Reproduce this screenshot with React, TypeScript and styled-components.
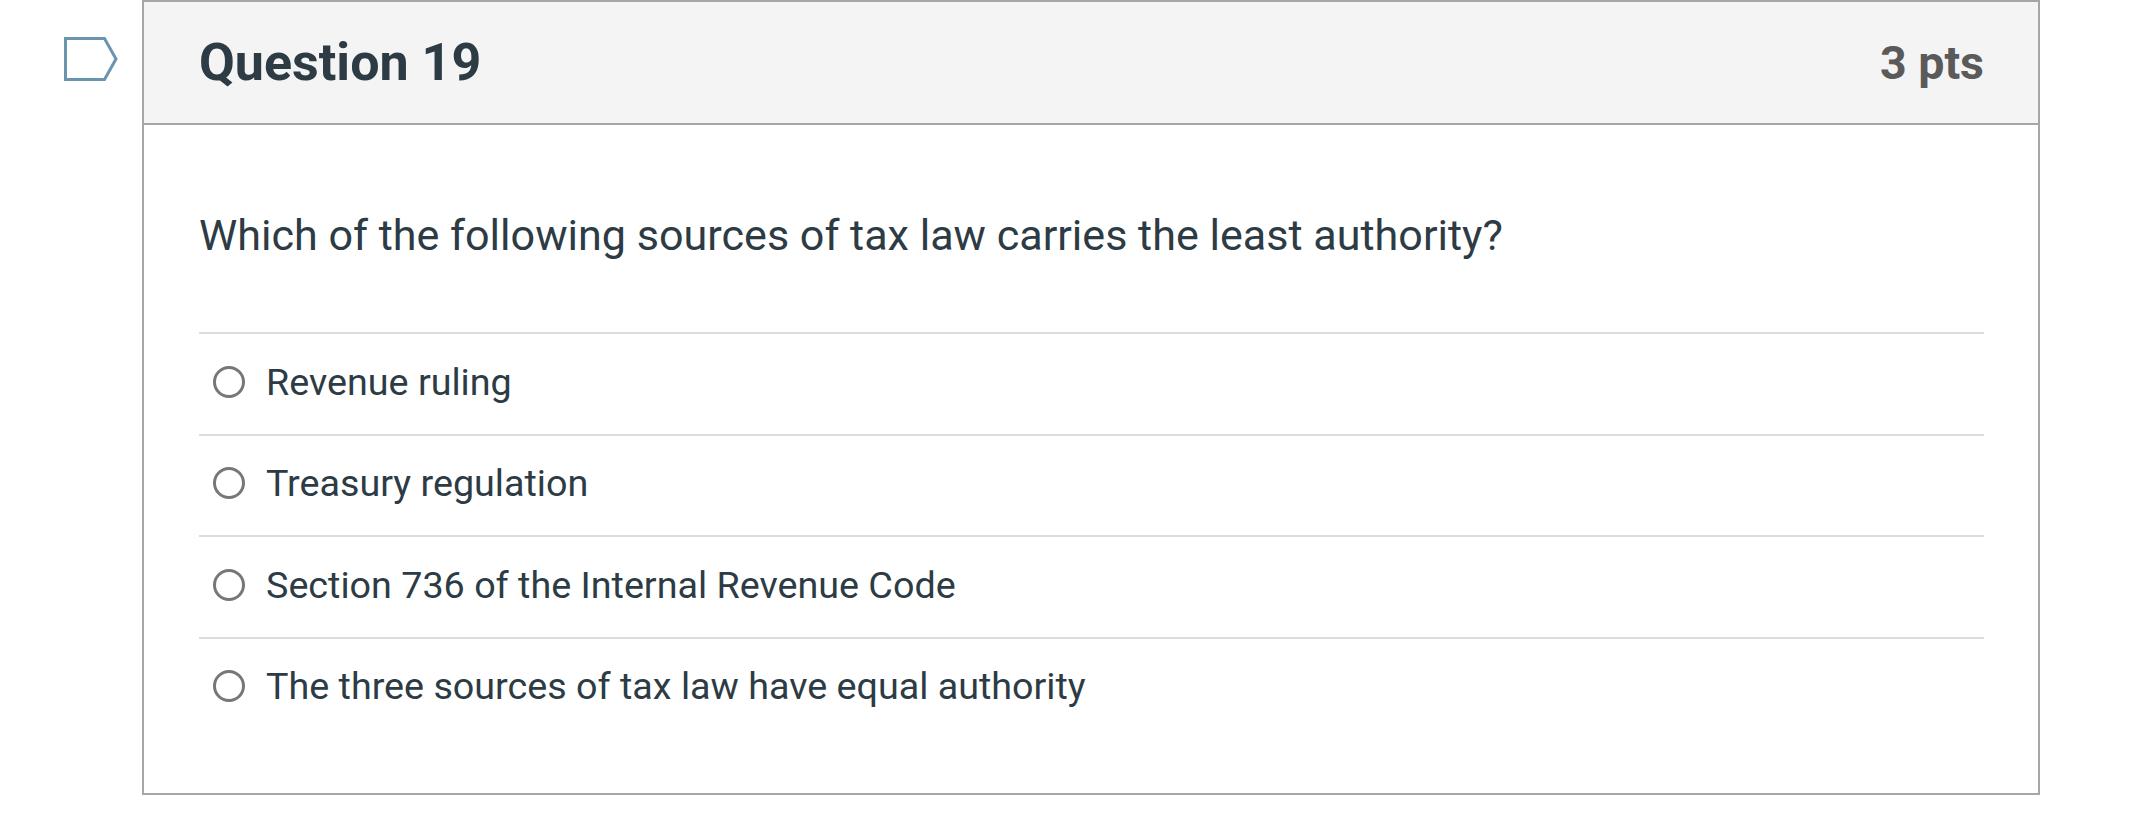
// App.tsx
// Quiz question card: header with points, question text and radio answers.

import styled, { createGlobalStyle } from "styled-components";

const answers = [
    "Revenue ruling",
    "Treasury regulation",
    "Section 736 of the Internal Revenue Code",
    "The three sources of tax law have equal authority",
];

const GlobalStyle = createGlobalStyle`
    html, body {
        margin: 0;
        padding: 0;
        background: #ffffff;
        font-family: Roboto, "Liberation Sans", sans-serif;
    }
`;

const Page = styled.div`
    display: flex;
    width: 2151px;
    height: 823px;
    overflow: hidden;
`;

// Narrow column on the left that holds the flag marker
const FlagColumn = styled.div`
    width: 142px;
    flex: none;
    display: flex;
    justify-content: flex-end;
    padding: 36px 24px 0 0;
    box-sizing: border-box;
`;

const Card = styled.section`
    width: 1898px;
    height: 795px;
    box-sizing: border-box;
    border: 2px solid #a6a6a6;
    display: flex;
    flex-direction: column;
`;

const Header = styled.header`
    height: 123px;
    box-sizing: border-box;
    flex: none;
    display: flex;
    justify-content: space-between;
    align-items: center;
    padding: 0 54px 0 55px;
    background: #f4f4f4;
    border-bottom: 2px solid #a6a6a6;
`;

const Title = styled.h2`
    margin: 0;
    font-size: 52px;
    font-weight: 700;
    color: #2d3b45;
`;

const Points = styled.div`
    font-size: 46.5px;
    font-weight: 700;
    color: #5a5a5a;
`;

const Body = styled.div`
    padding: 0 54px 0 55px;
`;

const Question = styled.p`
    margin: 0;
    height: 207px;
    box-sizing: border-box;
    padding-top: 14px;
    display: flex;
    align-items: center;
    font-size: 43.1px;
    color: #2d3b45;
`;

const AnswerRow = styled.label`
    display: flex;
    align-items: center;
    height: 101.5px;
    box-sizing: border-box;
    border-top: 2px solid #dcdcdc;
    padding: 0 0 4px 14px;
    gap: 21px;
    font-size: 37.7px;
    color: #2d3b45;
`;

const Radio = styled.span`
    flex: none;
    width: 32px;
    height: 32px;
    box-sizing: border-box;
    border: 3px solid #777777;
    border-radius: 50%;
`;

export default function App() {
    return (
        <Page>
            <GlobalStyle />
            <FlagColumn>
                <svg width="54" height="46" viewBox="0 0 54 46" fill="none">
                    <path d="M1.5 2.5H40.5L52 23L40.5 43.5H1.5Z" stroke="#6b95af" strokeWidth="3" />
                </svg>
            </FlagColumn>
            <Card>
                <Header>
                    <Title>Question 19</Title>
                    <Points>3 pts</Points>
                </Header>
                <Body>
                    <Question>Which of the following sources of tax law carries the least authority?</Question>
                    {answers.map((answer) => (
                        <AnswerRow key={answer}>
                            <Radio />
                            {answer}
                        </AnswerRow>
                    ))}
                </Body>
            </Card>
        </Page>
    );
}
